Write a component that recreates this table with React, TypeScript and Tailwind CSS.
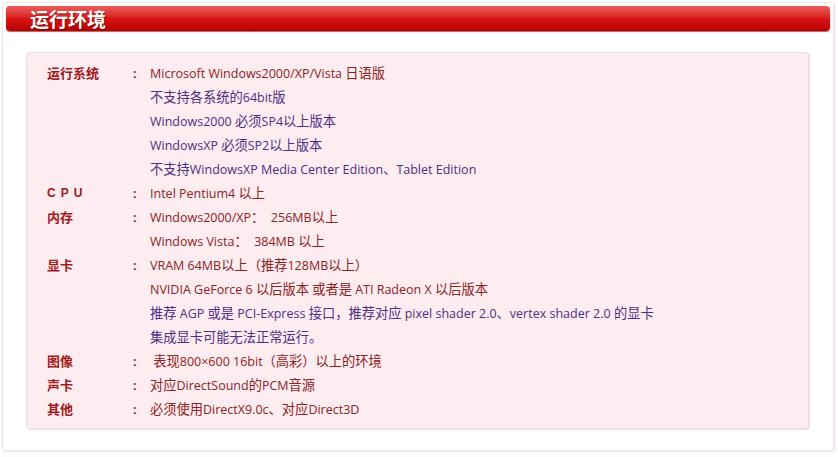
import React from 'react';

type Line = { text: string; tone: 'red' | 'purple' };
type Spec = { label: string; lines: Line[]; spaced?: boolean };

const specs: Spec[] = [
  {
    label: '运行系统',
    lines: [
      { text: 'Microsoft Windows2000/XP/Vista 日语版', tone: 'red' },
      { text: '不支持各系统的64bit版', tone: 'purple' },
      { text: 'Windows2000 必须SP4以上版本', tone: 'purple' },
      { text: 'WindowsXP 必须SP2以上版本', tone: 'purple' },
      { text: '不支持WindowsXP Media Center Edition、Tablet Edition', tone: 'purple' },
    ],
  },
  { label: 'CPU', spaced: true, lines: [{ text: 'Intel Pentium4 以上', tone: 'red' }] },
  {
    label: '内存',
    lines: [
      { text: 'Windows2000/XP：  256MB以上', tone: 'red' },
      { text: 'Windows Vista：  384MB 以上', tone: 'red' },
    ],
  },
  {
    label: '显卡',
    lines: [
      { text: 'VRAM 64MB以上（推荐128MB以上）', tone: 'red' },
      { text: 'NVIDIA GeForce 6 以后版本 或者是 ATI Radeon X 以后版本', tone: 'red' },
      { text: '推荐 AGP 或是 PCI-Express 接口，推荐对应 pixel shader 2.0、vertex shader 2.0 的显卡', tone: 'purple' },
      { text: '集成显卡可能无法正常运行。', tone: 'purple' },
    ],
  },
  { label: '图像', lines: [{ text: '\u00a0表现800×600 16bit（高彩）以上的环境', tone: 'red' }] },
  { label: '声卡', lines: [{ text: '对应DirectSound的PCM音源', tone: 'red' }] },
  { label: '其他', lines: [{ text: '必须使用DirectX9.0c、对应Direct3D', tone: 'red' }] },
];

// CJK glyphs in the source render a touch larger than the latin text
const renderMixed = (text: string) =>
  text.split(/([\u3000-\u9fff\uff00-\uffef]+)/).map((part, i) =>
    /[\u3000-\u9fff\uff00-\uffef]/.test(part) ? (
      <span key={i} className="text-[13.25px]">
        {part}
      </span>
    ) : (
      <React.Fragment key={i}>{part}</React.Fragment>
    )
  );

const SpecRow: React.FC<{ spec: Spec }> = ({ spec }) => (
  <div className="grid grid-cols-[86px_17px_1fr]">
    <div
      className={
        spec.spaced
          ? 'h-6 leading-6 text-[12px] font-bold text-[#a3191c] tracking-[5px] font-["Liberation_Sans",sans-serif]'
          : 'h-6 leading-6 text-[13px] font-bold text-[#a3191c] font-["Noto_Sans_CJK_SC",sans-serif]'
      }
    >
      {spec.label}
    </div>
    <div className="h-6 leading-6 text-[13px] font-bold text-[#8a3a3a]">:</div>
    <div>
      {spec.lines.map((line, i) => (
        <div
          key={i}
          className={
            line.tone === 'red'
              ? 'h-6 leading-6 whitespace-pre text-[#8e2124]'
              : 'h-6 leading-6 whitespace-pre text-[#4d2f86]'
          }
        >
          {renderMixed(line.text)}
        </div>
      ))}
    </div>
  </div>
);

export default function App() {
  return (
    <div className="w-[838px] h-[457px] bg-white p-[2px] font-['Open_Sans','Noto_Sans_CJK_SC',sans-serif] text-[12.5px]">
      <div className="h-[449px] w-[832px] border border-[#f2e2e2] rounded-[3px] shadow-[1px_1px_2px_rgba(220,180,180,0.4)] px-[3px] pt-[3px]">
        <div className="h-[25px] rounded-[4px] bg-gradient-to-b from-[#ec5a5a] via-[#d81616] to-[#b80000] shadow-[0_1px_1px_rgba(90,0,0,0.6)] flex items-center pl-[24px]">
          <h1 className="text-white text-[19px] font-bold leading-none font-['Noto_Sans_CJK_SC',sans-serif] [text-shadow:1px_1px_1px_rgba(80,0,0,0.6)]">
            运行环境
          </h1>
        </div>
        <div className="mt-[21px] ml-[20px] w-[783px] h-[377px] bg-[#fdedf0] border border-[#efdcdc] rounded-[3px] shadow-[1px_1px_1px_rgba(200,170,170,0.35)] pl-[20px] pt-[8px]">
          {specs.map((s) => (
            <SpecRow key={s.label} spec={s} />
          ))}
        </div>
      </div>
    </div>
  );
}
